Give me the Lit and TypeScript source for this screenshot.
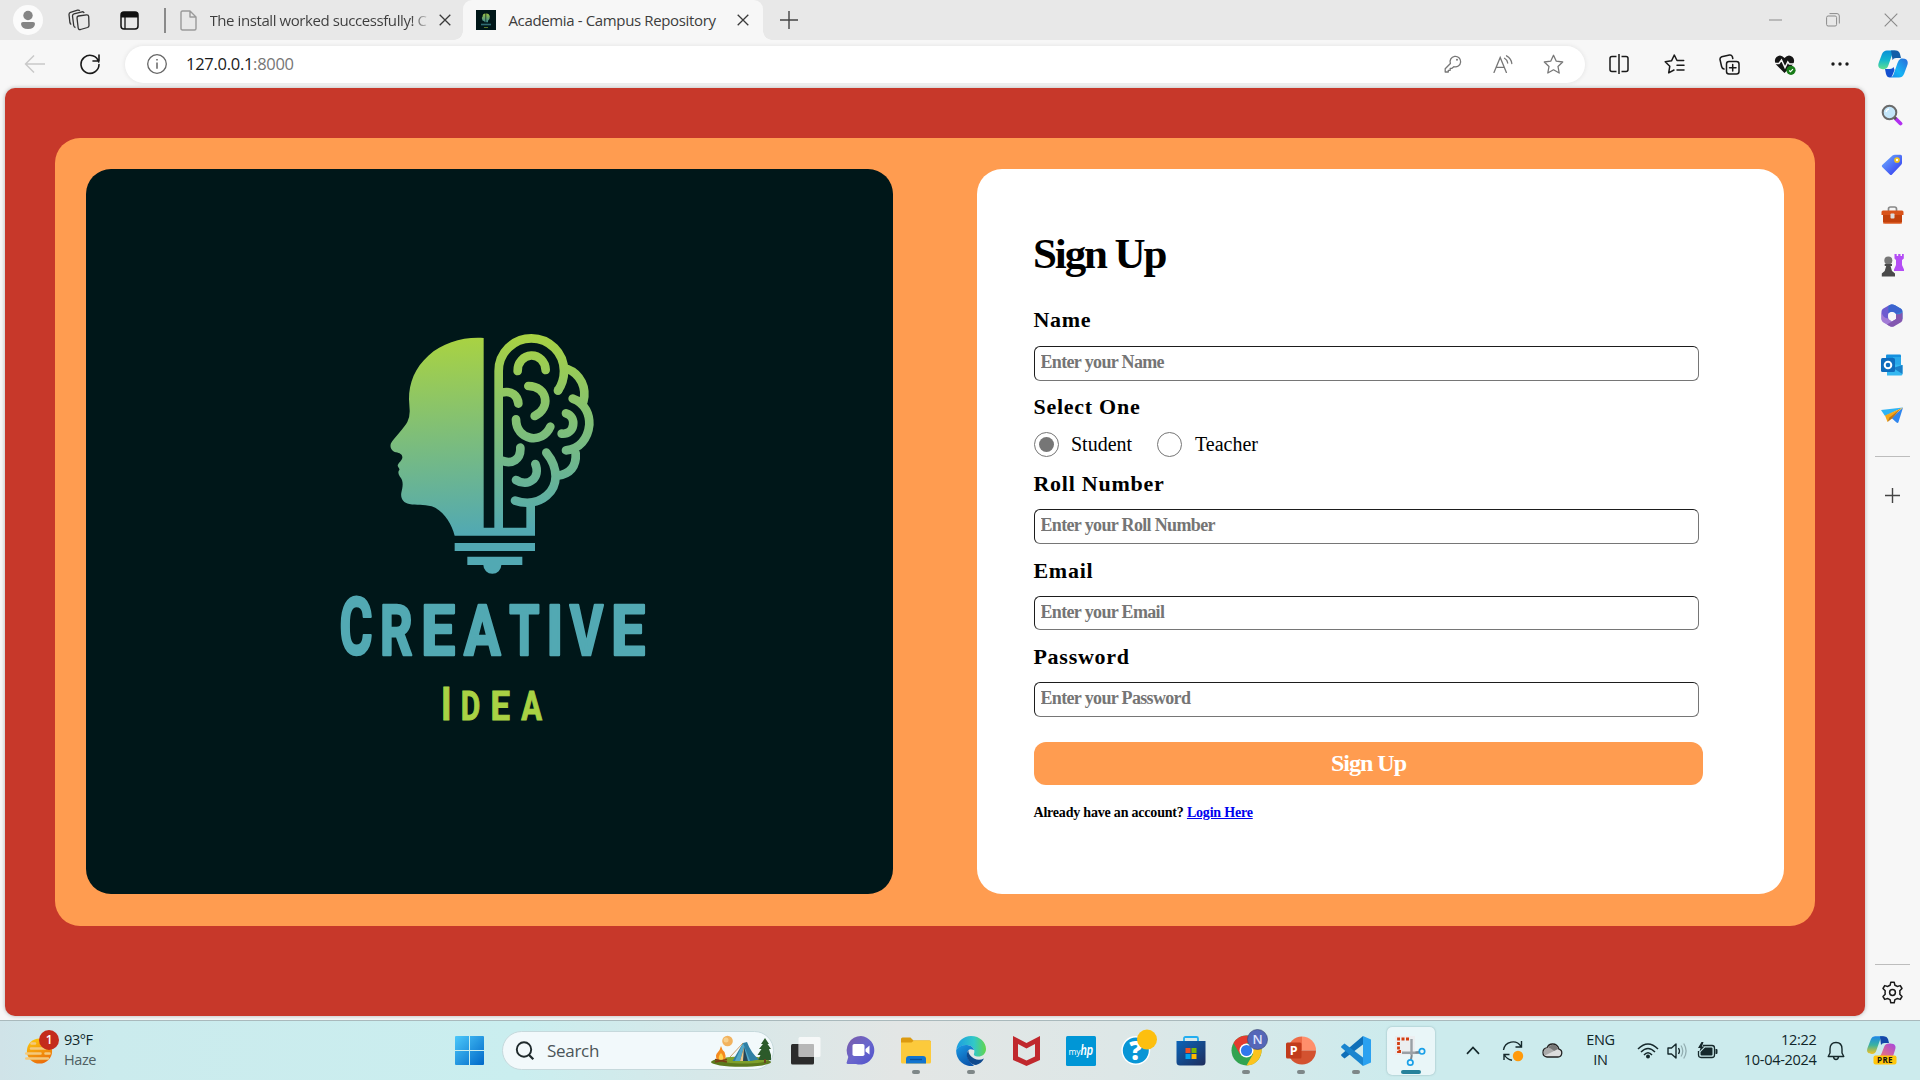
import { LitElement, html, css, svg, TemplateResult } from "lit";
import { customElement } from "lit/decorators.js";

const icon = (w: number, h: number, body: unknown, cls = "") =>
  html`<svg class="ic ${cls}" width=${w} height=${h} viewBox="0 0 ${w} ${h}" fill="none">${body}</svg>`;

/* ---------- brand artwork ---------- */
/* ink width and left bearing of each capital, in em */
const metrics: Record<string, [number, number]> = {
  C: [0.58, 0.04], R: [0.565, 0.057], E: [0.465, 0.057], A: [0.665, 0.006], T: [0.59, 0.02], I: [0.145, 0.065], V: [0.645, 0.006], D: [0.54, 0.057],
};
const letter = (ch: string, x: number, w: number, fs: number, y: number, sw: number) => {
  const [ink, lsb] = metrics[ch];
  const s = w / (ink * fs + sw);
  const tx = x - s * (lsb * fs - sw / 2);
  return svg`<text transform=${`translate(${tx.toFixed(1)} ${y}) scale(${s.toFixed(3)} 1)`} font-size=${fs} stroke-width=${sw}>${ch}</text>`;
};
const word: [string, number, number][] = [["R", 186, 92], ["E", 310, 92], ["A", 430, 115], ["T", 568, 92], ["I", 687, 32], ["V", 747, 105], ["E", 880, 92]];
const word2: [string, number, number][] = [["D", 426, 51], ["E", 516, 51], ["A", 603, 64]];

const logo = (w: number, h: number) => html`
  <svg class="logo" width=${w} height=${h} viewBox="0 0 1050 1290" fill="none">
    <defs>
      <linearGradient id="brand" gradientUnits="userSpaceOnUse" x1="490" y1="85" x2="520" y2="665">
        <stop offset="0" stop-color="#a8d243" />
        <stop offset="1" stop-color="#52a9b2" />
      </linearGradient>
    </defs>
    <path fill="url(#brand)" d="M491 84C430 80 370 97 325 137C285 173 267 218 267 268L269 300Q270 320 262 336C254 352 222 384 213 400C208 412 216 425 228 427C240 429 248 434 247 443C246 452 235 458 233 466C233 472 240 476 238 480C233 484 235 494 240 500C252 513 248 532 244 548C241 565 250 579 268 582C290 586 310 583 335 589C370 601 395 640 404 677H645V653H491Z" />
    <g stroke="url(#brand)" stroke-width="26" stroke-linecap="round">
      <path stroke-linecap="butt" d="M536 665V183A98 98 0 0 1 732 183Q732 215 714 242M632 665V580" />
      <path d="M714 242L714 241" />
      <path d="M593 183A42 45 0 0 1 677 180" />
      <path d="M625 228C683 228 694 295 644 318" />
      <path d="M545 248C575 240 594 258 595 281" />
      <path d="M588 328C588 392 668 405 691 350" />
      <path d="M545 452C577 464 603 448 601 413" />
      <path d="M646 462C663 502 625 534 588 510" />
      <path d="M679 428C718 476 714 529 680 557C655 578 620 584 585 572" />
      <path d="M742 177C782 192 801 235 790 275" />
      <path d="M758 266C798 280 809 317 808 344C804 386 778 418 738 421" />
      <path d="M738 310C772 320 765 375 725 371" />
      <path d="M767 430C770 470 750 492 712 497" />
    </g>
    <path fill="#52a9b3" d="M404 699H645V723H404ZM442 740H607V765H544A27 26 0 0 1 490 765H442Z" />
    <g font-family="Roboto, sans-serif" font-weight="700" stroke-linejoin="round" fill="#52a9b3" stroke="#52a9b3">
      ${letter("C", 62, 93, 237, 1033, 8)}${word.map(([c, x, lw]) => letter(c, x, lw, 212, 1036, 8))}
    </g>
    <g font-family="Roboto, sans-serif" font-weight="700" fill="#a9d244" stroke="#a9d244">
      ${letter("I", 369, 18, 138, 1228.5, 3)}${word2.map(([c, x, lw]) => letter(c, x, lw, 120, 1228.5, 3))}
    </g>
  </svg>`;

const favicon = icon(14, 17, svg`<defs><linearGradient id="fv" x1="0" y1="0" x2="0" y2="1"><stop stop-color="#9cc243" /><stop offset="1" stop-color="#3d8b92" /></linearGradient></defs><path d="M6.500 1.500Q3.500 1.700 3.600 4.500L2.800 6L3.500 8.500L5.300 9.200L5.800 10.200H6.500ZM7.200 1.500Q10 1 10.800 4Q11.200 7 9 8.700V10.200H7.200Z" fill="url(#fv)" /><path d="M2 12.500H12" stroke="#2f6c73" stroke-width="1.600" /><path d="M5 15.500H9" stroke="#5d7a2a" />`);

/* ---------- line icons ---------- */
const closeX = (s = 12, c = "#3a3a3a", sw = 1.3) =>
  icon(s, s, svg`<path d="M.7 .7L${s - 0.7} ${s - 0.7}M${s - 0.7} .7L.7 ${s - 0.7}" stroke=${c} stroke-width=${sw} />`);
const plusIcon = (s: number, c: string) =>
  icon(s, s, svg`<path d="M${s / 2} 0V${s}M0 ${s / 2}H${s}" stroke=${c} stroke-width="1.4" />`);

const workspaces = icon(22, 22, svg`<g stroke="#333" stroke-width="1.300" stroke-linejoin="round"><path d="M10.500 7L18.500 5.800Q20.500 5.600 20.700 7.500L21 16.500Q21 18 19.500 18.500L12.500 20.500Q10.500 21 10.200 19L9 9Q8.900 7.300 10.500 7Z" /><path d="M7.500 18.500Q6 18.300 5.700 16.500L4.500 7Q4.500 5.200 6 4.800L14 2.800Q15.500 2.500 16.200 4M3.300 15.500Q2.200 15 1.900 13.500L1 5.500Q1 3.800 2.500 3.300L9.500 1.200Q11 .9 11.800 1.800" /></g>`);
const tabActions = icon(19, 19, svg`<rect x="1" y="1" width="17" height="17" rx="3" stroke="#111" stroke-width="1.500" /><path d="M1 6.500V3.500Q1 1 3.500 1H15.500Q18 1 18 3.500V6.500Z" fill="#111" /><path d="M5 6V18" stroke="#111" stroke-width="1.300" />`);
const docIcon = icon(17, 21, svg`<path d="M3 1H10L16 7V18.500Q16 20 14.500 20H2.500Q1 20 1 18.500V2.500Q1 1 2.500 1ZM10 1V7H16" stroke="#9a9a9a" stroke-width="1.400" stroke-linejoin="round" />`);
const backIcon = icon(22, 20, svg`<path d="M21 10H2M10 1.500L1.500 10L10 18.500" stroke="#c9c9c9" stroke-width="1.400" />`);
const reloadIcon = icon(22, 22, svg`<path d="M19.700 9A9 9 0 1 0 20 11.500M20 2V8H14" stroke="#1a1a1a" stroke-width="1.600" stroke-linecap="round" stroke-linejoin="round" />`);
const infoIcon = icon(22, 22, svg`<circle cx="11" cy="11" r="9.300" stroke="#666" stroke-width="1.300" /><path d="M11 9.500V15.800M11 6V7.600" stroke="#666" stroke-width="1.500" />`);
const keyIcon = icon(18, 18, svg`<path d="M6.400 8.500A5.300 5.300 0 1 1 9.800 11.700L8 13.300H6.200V15.300H4.300V17H1.200V13.800Z" stroke="#777" stroke-width="1.300" stroke-linejoin="round" /><circle cx="13" cy="4.800" r="1" fill="#777" />`);
const readIcon = icon(20, 18, svg`<path d="M1 17.500L7.200 2.500L13.400 17.500M3.200 12.300H11.200M11.500 3.300Q14.300 4.800 14.700 8M13.500 .8Q18.300 3.300 18.800 8.500" stroke="#777" stroke-width="1.300" stroke-linecap="round" />`);
const starPath = "M10.500 1.300L13.300 7.200L19.700 8L15 12.500L16.200 19L10.500 15.800L4.800 19L6 12.500L1.300 8L7.700 7.200Z";
const starIcon = icon(21, 21, svg`<path d=${starPath} stroke="#777" stroke-width="1.300" stroke-linejoin="round" />`);
const splitIcon = icon(20, 20, svg`<path d="M7.500 2.500H3Q1 2.500 1 4.500V15.500Q1 17.500 3 17.500H7.500M12.500 2.500H17Q19 2.500 19 4.500V15.500Q19 17.500 17 17.500H12.500M10 0V20" stroke="#1a1a1a" stroke-width="1.500" />`);
const favIcon = icon(21, 21, svg`<path d="M19.700 6.500H13L10.300 1L7.500 6.800L1.200 7.700L5.800 12.200L4.700 18.800L10 16M13 11.300H20M13 16H20" stroke="#1a1a1a" stroke-width="1.500" stroke-linejoin="round" stroke-linecap="round" />`);
const collectIcon = icon(21, 21, svg`<g stroke="#1a1a1a" stroke-width="1.500" stroke-linecap="round" stroke-linejoin="round"><rect x="7.500" y="7.500" width="12.500" height="12.500" rx="2.500" /><path d="M13.700 10.500V17M10.500 13.700H17M5 15Q3 14.500 2.600 12.500L1 5.500Q.8 3.500 2.700 2.800L10.500 1Q12.500 .7 13.300 2.500L13.800 4.500" /></g>`);
const heartIcon = icon(22, 21, svg`<path d="M10.500 19L2 10.500Q-.5 6 2.500 3Q6.500 -.5 10.500 4Q14.500 -.5 18.500 3Q21.500 6 19 10.500Z" fill="#151515" /><path d="M0 9.500H5L7.500 6L11 13.500L13.800 8L15.300 10H21" stroke="#f7f7f7" stroke-width="1.500" /><circle cx="17" cy="16.300" r="4.600" fill="#187b18" /><path d="M15.200 16.500L16.500 17.700L19 15.100" stroke="#fff" stroke-width="1.100" />`);
const dotsIcon = icon(18, 4, svg`<g fill="#1a1a1a"><circle cx="2" cy="2" r="1.700" /><circle cx="9" cy="2" r="1.700" /><circle cx="16" cy="2" r="1.700" /></g>`);
const gearIcon = icon(23, 23, svg`<path d="M9.800 1.200H13.200L13.900 4.300Q15.200 4.800 16.200 5.500L19.300 4.600L21 7.500L18.800 9.800Q19.100 11.500 18.800 13.200L21 15.500L19.300 18.400L16.200 17.500Q15.200 18.300 13.900 18.700L13.200 21.800H9.800L9.100 18.700Q7.800 18.300 6.800 17.500L3.700 18.400L2 15.500L4.200 13.200Q3.900 11.500 4.200 9.800L2 7.500L3.700 4.600L6.800 5.500Q7.800 4.800 9.100 4.300Z" stroke="#1a1a1a" stroke-width="1.500" stroke-linejoin="round" /><circle cx="11.500" cy="11.500" r="2.900" stroke="#1a1a1a" stroke-width="1.500" />`);

/* ---------- colour icons ---------- */
const copilot = icon(30, 28, svg`
  <defs><linearGradient id="cpA" x1="0" y1="0" x2="0" y2="1"><stop stop-color="#0a8fd6" /><stop offset=".5" stop-color="#12b5cf" /><stop offset="1" stop-color="#5fe08f" /></linearGradient>
  <linearGradient id="cpB" x1="1" y1="0" x2="0" y2="1"><stop stop-color="#2a6ad8" /><stop offset=".6" stop-color="#16b4f5" /><stop offset="1" stop-color="#1687ea" /></linearGradient></defs>
  <path d="M7 19C1 20 -1 17 1 12L4 4Q5.500 .5 9 .5H18Q15 1 14 5L10.500 15Q9.500 18.500 7 19Z" fill="url(#cpA)" />
  <path d="M13 .5H18Q21 .5 22 4L23 8H18Q15.500 8 14.500 10Z" fill="#145fa8" />
  <path d="M23 8.500C29 8 31 11 29 16L26 24Q24.500 27.500 21 27.500H12Q15 27 16 23L19.500 13Q20.500 9.500 23 8.500Z" fill="url(#cpB)" />
  <path d="M7 19H12Q14.500 19 15.500 17L16.500 20L14.500 25Q13.800 27.500 12 27.500Q9 27.500 8 24Z" fill="#1450cf" />`);
const searchColor = icon(22, 22, svg`<path d="M14.500 14.500L19.500 19.500" stroke="#b12ff0" stroke-width="3.800" stroke-linecap="round" /><path d="M12.500 12.500L15 15" stroke="#555" stroke-width="2.600" /><circle cx="8.500" cy="8.500" r="6.800" fill="#c4e6fa" stroke="#6a6a6a" stroke-width="2" /><path d="M5 8Q5.500 5.500 8 5" stroke="#fff" stroke-width="1.300" />`);
const tagIcon = icon(22, 22, svg`<defs><linearGradient id="tg" x1="0" y1="0" x2="1" y2="1"><stop stop-color="#6fb4ff" /><stop offset="1" stop-color="#3131ee" /></linearGradient></defs><path d="M11.500 1.500Q12.500 .8 14 .8H19.500Q21 .8 21 2.300V9Q21 10 20 11L11 20.400Q10 21.500 8.800 20.400L1.200 13Q.2 12 1.200 11Z" fill="url(#tg)" /><circle cx="16" cy="6" r="2" fill="#fff" stroke="#f5c518" stroke-width="1.700" />`);
const toolbox = icon(23, 18, svg`<path d="M7.500 5V3Q7.500 1 9.500 1H13.500Q15.500 1 15.500 3V5" stroke="#888" stroke-width="1.700" /><path d="M2 8H21V15.500Q21 17.500 19 17.500H4Q2 17.500 2 15.500Z" fill="#c2410c" /><path d="M.5 6Q.5 4.500 2 4.500H21Q22.500 4.500 22.500 6V9H.5Z" fill="#d9531a" /><rect x="9.500" y="7.500" width="4" height="5" rx=".8" fill="#ddd" /><path d="M2 17H21" stroke="#e8672a" />`);
const chess = icon(23, 23, svg`<path d="M13.500 0H15.700V2H17.200V0H19.500V2H21V0H22.800V4.500L21 6V11L23 15.500V17H13V15.500L15 11V6L13.500 4.500Z" fill="#b44df5" /><circle cx="7.300" cy="6.500" r="4" fill="#777" /><path d="M3.700 10H11V12H9.500L11 17L14 19.500V22.500H.8V19.500L3.700 17L5.200 12H3.700Z" fill="#4a4a4a" />`);
const m365 = icon(22, 23, svg`
  <path d="M11 .5Q9.500 .3 8 1.200L2 4.700Q.5 5.700 .5 7.500V15.500L7.500 18V9.500L14 6Z" fill="#6d5bd0" />
  <path d="M11 .5Q12.500 .3 14 1.200L20 4.700Q21.500 5.700 21.500 7.500V15L15 12V10L7.500 6V2.500Q9 .5 11 .5Z" fill="#2f86d8" />
  <path d="M7.500 2V9.500L11 7.500L15 10L21.500 7.500Q21 5.500 20 4.700L14 1.200Q11 -.5 7.500 2Z" fill="#3c64cf" />
  <path d="M.5 8V15.500Q.5 17.300 2 18.300L8 21.800Q11 23.500 14 21.800L15 15L11 17.500L7 14.500Q2 14 .5 8Z" fill="#a27bd6" />
  <path d="M21.500 8V15.500Q21.500 17.300 20 18.300L14 21.800Q11 23.500 8 21.800L6 20.500L15 15V10Q19 11 21.500 8Z" fill="#8357b0" />
  <circle cx="11" cy="12" r="4" fill="#f7f7f7" />`);
const outlook = icon(22, 22, svg`<rect x="5" y=".5" width="15" height="15" rx="1" fill="#1490df" /><path d="M12 3H20V11H12Z" fill="#28a8ea" /><path d="M6 21.500V10L21.500 11V20Q21.500 21.500 20 21.500Z" fill="#35b8f1" /><path d="M21.500 11V20L12 14Z" fill="#1a7fc8" /><rect x="0" y="4" width="14" height="14" rx="1.500" fill="#0f6cbd" /><circle cx="7" cy="11" r="3.300" stroke="#fff" stroke-width="2" />`);
const plane = icon(22, 17, svg`<path d="M0 3L22 .5L4 9Z" fill="#2fb4f5" /><path d="M22 .5L17.500 15Q17 16.500 15.500 15.500L10.500 11Z" fill="#2f86ee" /><path d="M22 .5L4 8.500L6.500 15L9 11Z" fill="#f5a81b" /><path d="M20 1.500L8.500 10.500L6.500 15L11 11.500Z" fill="#b8741a" />`);

const weather = icon(30, 26, svg`<defs><linearGradient id="sun" x1=".3" y1="0" x2=".7" y2="1"><stop stop-color="#fbc50e" /><stop offset="1" stop-color="#ea6a0b" /></linearGradient></defs><circle cx="14.500" cy="13" r="12.600" fill="url(#sun)" /><g stroke="#f4c97c" stroke-width="2.600" stroke-linecap="round"><path d="M1.300 15.500H15.500M20.500 15.500H24.500M1.300 20.500H23M6 10.500H20M6.500 5.500H10" /></g>`);
const winLogo = icon(29, 29, svg`<defs><linearGradient id="wn" gradientUnits="userSpaceOnUse" x1="0" y1="0" x2="29" y2="29"><stop stop-color="#4cc8fa" /><stop offset="1" stop-color="#0068c8" /></linearGradient></defs><path fill="url(#wn)" d="M1 0H14V14H0V1Q0 0 1 0ZM15 0H28Q29 0 29 1V14H15ZM0 15H14V29H1Q0 29 0 28ZM15 15H29V28Q29 29 28 29H15Z" />`);
const searchGlyph = icon(20, 20, svg`<circle cx="9" cy="8.500" r="7.200" stroke="#1f2a2c" stroke-width="1.900" /><path d="M13.800 13.800L18.300 18.300" stroke="#1f2a2c" stroke-width="2.300" />`);
const camp = icon(62, 32, svg`
  <ellipse cx="31" cy="27" rx="30" ry="4.800" fill="#5c7a1e" /><ellipse cx="34" cy="25" rx="24" ry="3.500" fill="#7fa02a" />
  <circle cx="17.500" cy="6" r="5.300" fill="#f2b25e" /><circle cx="16" cy="5" r="2.500" fill="#f7cf8c" />
  <path d="M11 11Q12 15 14.500 17Q16.500 21 15 25H7Q4.500 20 8 17Q10 15 11 11Z" fill="#f58a1f" /><path d="M11 18Q14 21 13 25H9Q8 21 11 18Z" fill="#ffd24a" /><path d="M5 27L17 24.500M5 24.500L17 27" stroke="#7a3e16" stroke-width="1.700" />
  <path d="M55 3L51 9H53L49 14H51.500L47.500 20H50.500L48 25H61V20L59 14H61L57.500 9H59Z" fill="#2c5a2a" /><path d="M55 24V28" stroke="#6b4420" stroke-width="2" />
  <path d="M33 8L22.500 26H41L49 24.500Q41 18 37 7Z" fill="#2f7fa4" /><path d="M33 8L25 26H40Z" fill="#53a9c9" /><path d="M34 12L30 26H38Z" fill="#24465a" /><path d="M34 12L30 26H33Z" fill="#e9c78a" /><path d="M33 8L20 22" stroke="#b98545" stroke-width=".8" />`);
const taskView = icon(30, 28, svg`<rect x="0" y="7" width="23" height="20.500" rx="1.500" fill="#2b2b2b" /><rect x="7.500" y="0" width="22" height="20" rx="1.500" fill="#fff" fill-opacity=".72" /><path d="M7.500 7H23V20H7.500Z" fill="#a9a9a9" fill-opacity=".5" />`);
const chat = icon(30, 29, svg`<defs><linearGradient id="ch" x1="0" y1="0" x2="1" y2="1"><stop stop-color="#7b5aa6" /><stop offset=".5" stop-color="#6a66cc" /><stop offset="1" stop-color="#4f52cc" /></linearGradient></defs><path d="M15 0A14.300 14.300 0 1 1 10 28H2Q0 28 .8 26L2.300 21A14.300 14.300 0 0 1 15 0Z" fill="url(#ch)" /><rect x="6.500" y="8" width="12" height="12" rx="1.800" fill="#fff" /><path d="M19.500 13L23.500 9.500V18.500L19.500 15.500Z" fill="#fff" />`);
const folder = icon(30, 27, svg`<path d="M0 2Q0 .5 1.500 .5H9.500L12.500 3.500H28.500Q30 3.500 30 5V10H0Z" fill="#dc9a10" /><path d="M0 5.500H10.500L13 3.500H28.500Q30 3.500 30 5V25Q30 26.500 28.500 26.500H1.500Q0 26.500 0 25Z" fill="#fcca3c" /><path d="M5 26.500V22Q5 19 8 19H22Q25 19 25 22V26.500Z" fill="#1274cf" /><path d="M9 22.500H21" stroke="#0a4f9a" stroke-width="1.300" />`);
const edge = icon(30, 30, svg`<defs><linearGradient id="eg" x1="0" y1=".3" x2="1" y2=".3"><stop stop-color="#1b9de2" /><stop offset=".6" stop-color="#32c8c8" /><stop offset="1" stop-color="#62d64a" /></linearGradient><linearGradient id="eb" x1="0" y1="0" x2=".5" y2="1"><stop stop-color="#1a9be6" /><stop offset="1" stop-color="#0b58ae" /></linearGradient></defs>
  <path d="M.3 14C1 5.500 7.500 0 15 0C24 0 30 6.500 30 13C30 18 26 20.500 22.500 20.500C18.500 20.500 17.500 19 18 17.800C19.500 14 17 9.500 11 9Q4 9 .3 14Z" fill="url(#eg)" />
  <path d="M.2 14Q4 8.500 11 9C15 9.300 17.500 11.500 18 14Q12 11.500 11 17Q10.500 24 18 29.700A15 15 0 0 1 .2 14Z" fill="url(#eb)" />
  <path d="M12.200 14Q9 20 13 25Q16 29 20 29Q25.500 27.500 28 22.500Q23 25 18 22.500Q12.500 19.500 12.200 14Z" fill="#104a8e" />`);
const mcafee = icon(27, 30, svg`<path d="M0 0L13.500 7L27 0V24L13.500 30L0 24ZM5 8V20.500L13.500 24.500L22 20.500V8L13.500 12.500Z" fill="#c0282d" fill-rule="evenodd" />`);
const myhp = icon(30, 30, svg`<rect width="30" height="30" rx="1.500" fill="#0096d6" /><text x="2.500" y="18.500" font-family="Open Sans, sans-serif" font-size="8.500" fill="#fff">my</text><text x="14.500" y="19" font-family="Liberation Sans Narrow, Liberation Sans, sans-serif" font-style="italic" font-weight="700" font-size="14" fill="#fff" textLength="12.500" lengthAdjust="spacingAndGlyphs">hp</text>`);
const help = icon(37, 37, svg`<circle cx="14.800" cy="21.500" r="13.700" fill="#0996d6" stroke="#fff" stroke-width="1.400" /><text x="14.800" y="31" text-anchor="middle" font-family="Open Sans, sans-serif" font-weight="800" font-size="26" fill="#fff">?</text><circle cx="26" cy="10.500" r="10" fill="#fdbf0f" />`);
const store = icon(30, 30, svg`<defs><linearGradient id="st" x1="0" y1="0" x2="1" y2="1"><stop stop-color="#0b64b8" /><stop offset="1" stop-color="#1f2d5c" /></linearGradient></defs><path d="M8 6V2.500Q8 1 9.500 1H20.500Q22 1 22 2.500V6" stroke="#23aef0" stroke-width="1.800" /><path d="M.5 5H29.500V26Q29.500 29.500 26 29.500H4Q.5 29.500 .5 26Z" fill="url(#st)" /><path d="M9.500 12H14.500V17H9.500Z" fill="#f25022" /><path d="M15.500 12H20.500V17H15.500Z" fill="#7fba00" /><path d="M9.500 18H14.500V23H9.500Z" fill="#00a4ef" /><path d="M15.500 18H20.500V23H15.500Z" fill="#ffb900" />`);
const chrome = icon(37, 37, svg`<circle cx="15.500" cy="21.500" r="15" fill="#31a350" /><path d="M2.500 14A15 15 0 0 1 28.500 14H15.500L9 25.300Z" fill="#e33b2e" /><path d="M28.500 14A15 15 0 0 1 15.500 36.500L22 25.200L22 14Z" fill="#fcc31e" /><circle cx="15.500" cy="21.500" r="7" fill="#fff" /><circle cx="15.500" cy="21.500" r="5.600" fill="#2f78ec" /><circle cx="26.500" cy="10.500" r="10" fill="#5566b8" stroke="#3f4a78" stroke-width=".7" /><text x="26.500" y="15.300" text-anchor="middle" font-family="Open Sans, sans-serif" font-weight="600" font-size="13" fill="#dfe4ff">N</text>`);
const ppt = icon(30, 29, svg`<path d="M16 .5A14 14 0 0 0 2 14.500H16Z" fill="#ed6c47" /><path d="M16 .5A14 14 0 0 1 30 14.500H16Z" fill="#ff8f6b" /><path d="M2 14.500A14 14 0 0 0 30 14.500Z" fill="#d35230" /><rect x="0" y="6.500" width="15.500" height="16" rx="1.500" fill="#c13b1b" /><text x="7.700" y="19" text-anchor="middle" font-family="Open Sans, sans-serif" font-weight="700" font-size="12.500" fill="#fff">P</text>`);
const vscode = icon(30, 30, svg`<path d="M22 0L30 3.500V26.500L22 30Z" fill="#2aa1f0" /><path d="M22 0V8.500L3.500 22.500L.5 20Q-.2 19 .5 18.300Z" fill="#0f6fb8" /><path d="M22 30V21.500L3.500 7.500L.5 10Q-.2 11 .5 11.700Z" fill="#1a85cf" />`);
const snip = icon(36, 32, svg`<rect x="2" y="1" width="20" height="19" fill="#eceef0" /><path d="M16 4H5.500V16.500H9" stroke="#d33d10" stroke-width="2.800" stroke-dasharray="3 1.500" /><path d="M18.500 4V20M9 17.800H26" stroke="#9aa0a5" stroke-width="2.400" /><path d="M18.800 20L18 24.500M22.500 17.500L26.500 17" stroke="#7a868e" stroke-width="2" /><circle cx="17.300" cy="27.500" r="2.700" stroke="#1aa0e8" stroke-width="1.700" /><circle cx="29" cy="16.300" r="2.700" stroke="#1aa0e8" stroke-width="1.700" />`);

const chevron = icon(14, 9, svg`<path d="M1 7.800L7 1.500L13 7.800" stroke="#15282b" stroke-width="1.700" />`);
const sync = icon(22, 22, svg`<path d="M1.500 10A9.500 9.500 0 0 1 19 6.500M19.500 1V7H13.500M2 20V14.500H7.500M2.500 15Q5 19.500 10 20.300" stroke="#15282b" stroke-width="1.400" /><circle cx="16" cy="16" r="5.200" fill="#ff9a0c" />`);
const cloud = icon(21, 15, svg`<path d="M5 14H16A4 4 0 0 0 17 6.200Q15.500 1 10.500 1Q6.500 1 5 5Q1 5.500 1 9.500Q1 13.500 5 14Z" fill="#ddd" stroke="#222" stroke-width="1.300" /><path d="M5 5Q8 4 12 8L3 12.500Q1.500 11 1.700 9Q2 5.500 5 5Z" fill="#aaa" /><path d="M6 4.500Q8 1.500 11 1.800Q15 2 16.200 6L12 8Q9 5 6 4.500Z" fill="#777" />`);
const wifi = icon(22, 16, svg`<g stroke="#15282b" stroke-width="1.500"><path d="M1 6Q11 -4 21 6M4 9Q11 1.800 18 9M7 12Q11 7.500 15 12" /></g><circle cx="11" cy="13.500" r="2" fill="#15282b" />`);
const sound = icon(21, 18, svg`<path d="M1 6H4.500L9 2V16L4.500 12H1Z" stroke="#15282b" stroke-width="1.400" stroke-linejoin="round" /><path d="M11.500 6Q13.500 9 11.500 12" stroke="#15282b" stroke-width="1.300" /><path d="M14 3.500Q17.500 9 14 14.500M16.700 1.500Q21.500 9 16.700 16.500" stroke="#93aeb1" stroke-width="1.300" />`);
const battery = icon(21, 17, svg`<path d="M6 3.500H15Q17.500 3.500 17.500 6V13Q17.500 15.500 15 15.500H4Q1.500 15.500 1.500 13V9" stroke="#15282b" stroke-width="1.300" /><path d="M8 5.500H14.500Q15.500 5.500 15.500 6.500V12.500Q15.500 13.500 14.500 13.500H4.500Q3.500 13.500 3.500 12.500V10Z" fill="#15282b" /><path d="M18.500 7H19.500Q20.500 7 20.500 8V11Q20.500 12 19.500 12H18.500ZM4.500 0L1 6H3.500L2.500 9.500L7.500 4.500H5L6.500 0Z" fill="#15282b" />`);
const bell = icon(18, 20, svg`<path d="M9 1.500Q15 1.500 15 8V12L16.800 15.500H1.200L3 12V8Q3 1.500 9 1.500ZM6.500 16Q7 18.500 9 18.500Q11 18.500 11.500 16" stroke="#15282b" stroke-width="1.400" stroke-linejoin="round" />`);
const copilotPre = icon(30, 29, svg`
  <defs><linearGradient id="pA" x1="0" y1="0" x2="0" y2="1"><stop stop-color="#1c86e8" /><stop offset=".5" stop-color="#3bb3a0" /><stop offset="1" stop-color="#f5c21d" /></linearGradient><linearGradient id="pB" x1="1" y1="0" x2="0" y2="1"><stop stop-color="#a546e0" /><stop offset="1" stop-color="#f77b6b" /></linearGradient></defs>
  <path d="M5 18C0 18 -.5 15 .5 12L4 3Q5 .3 8 .3H17Q14 1 13 4L9.500 14Q8.500 18 5 18Z" fill="url(#pA)" /><path d="M13 .3H17Q20 .3 21 3L22 7H17.500Q15 7 14 9Z" fill="#1447a8" /><path d="M22 7.500C28 7 29.500 10 28 14L25.500 22H11Q14 20 15.500 15L17.500 10Q18.500 7.500 22 7.500Z" fill="url(#pB)" />
  <rect x="6.500" y="19.500" width="23" height="9" rx="2" fill="#ffc60b" /><text x="18" y="27" text-anchor="middle" font-family="Open Sans, sans-serif" font-weight="700" font-size="8" letter-spacing=".4" fill="#111">PRE</text>`);

interface Field { id: string; label: string; hint: string }
const fields: Field[] = [
  { id: "roll", label: "Roll Number", hint: "Enter your Roll Number" },
  { id: "email", label: "Email", hint: "Enter your Email" },
  { id: "password", label: "Password", hint: "Enter your Password" },
];
interface App { art: TemplateResult; run?: boolean; active?: boolean; badge?: boolean }
const apps: App[] = [
  { art: taskView }, { art: chat }, { art: folder, run: true }, { art: edge, run: true }, { art: mcafee }, { art: myhp },
  { art: help, badge: true }, { art: store }, { art: chrome, run: true, badge: true }, { art: ppt, run: true }, { art: vscode, run: true },
  { art: snip, active: true },
];

@customElement("app-root")
export class AppRoot extends LitElement {
  static styles = css`
    :host { display: block; width: 1920px; height: 1080px; overflow: hidden; font-family: "Open Sans", "Noto Sans", sans-serif; background: #f7f7f7; color: #1a1a1a; }
    * { box-sizing: border-box; }
    .ic { display: block; flex: none; }
    .screen { display: grid; grid-template-rows: 40px 48px 932px 60px; height: 1080px; }
    .slot { display: flex; align-items: center; justify-content: center; flex: none; }

    .tabs { background: #e8e8e8; display: flex; align-items: stretch; }
    .left { display: flex; width: 164px; padding-left: 2px; align-items: center; }
    .left .slot { width: 51px; }
    .avatar { width: 30px; height: 30px; border-radius: 50%; background: #fbfbfb; display: flex; align-items: center; justify-content: center; }
    .vline { width: 1.500px; height: 25px; background: #8a8a8a; align-self: center; }
    .tab { display: flex; align-items: center; font-size: 15px; color: #3d3d3d; white-space: nowrap; }
    .tab.idle { width: 297px; padding-left: 14px; }
    .tab.idle .title { width: 221px; margin: 0 8px 0 13px; letter-spacing: -.42px; background: linear-gradient(90deg, #3d3d3d 91%, #3d3d3d22 99%); -webkit-background-clip: text; background-clip: text; color: transparent; }
    .tab.live { width: 300px; background: #f7f7f7; border-radius: 9px 9px 0 0; padding-left: 13px; position: relative; }
    .tab.live::before, .tab.live::after { content: ""; position: absolute; bottom: 0; width: 9px; height: 9px; }
    .tab.live::before { left: -9px; background: radial-gradient(circle at 0 0, transparent 8.500px, #f7f7f7 9px); }
    .tab.live::after { right: -9px; background: radial-gradient(circle at 100% 0, transparent 8.500px, #f7f7f7 9px); }
    .tab.live .title { width: 215px; margin: 0 13px 0 13px; letter-spacing: -.36px; }
    .title { margin-top: -1px !important; }
    .fav { width: 20px; height: 20px; background: #001719; display: flex; align-items: center; justify-content: center; }
    .newtab { width: 52px; }
    .wins { margin-left: auto; display: flex; width: 173px; }
    .wins .slot { width: 57.600px; }

    .bar { display: flex; align-items: center; }
    .back { width: 70px; }
    .reload { width: 40px; }
    .url { margin-left: 15px; width: 1460px; height: 37px; border-radius: 19px; background: #fff; box-shadow: 0 0 5px rgba(0,0,0,.09); display: flex; align-items: center; padding-left: 21px; font-size: 16.500px; }
    .addr { margin: -2px 0 0 18px; letter-spacing: -.28px; }
    .port { color: #767676; }
    .urlicons { margin-left: auto; display: flex; padding-right: 7px; }
    .urlicons .slot { width: 50px; }
    .tools { display: flex; padding-left: 6px; }
    .tools .slot { width: 55.400px; }
    .cop { width: 50px; }

    .main { display: flex; }
    .page { margin-left: 5px; width: 1860px; height: 928px; border-radius: 10px; background: #c7382a; padding: 50px; box-shadow: 0 0 4px rgba(0,0,0,.28); flex: none; }
    .frame { width: 1760px; height: 787.500px; border-radius: 25px; background: #ff9c50; padding: 31px; display: flex; justify-content: space-between; }
    .hero { width: 807px; height: 725px; border-radius: 25px; background: #001719; padding: 141px 0 0 234px; }
    .logo { display: block; flex: none; }
    .card { width: 807px; height: 725px; border-radius: 25px; background: #fff; padding: 59px 0 0 57px; font-family: "Liberation Serif", serif; color: #000; }
    h1 { margin: 1px 0 28px -1px; font-size: 43px; line-height: 50px; letter-spacing: -2.100px; font-weight: 700; }
    .field { display: flex; flex-direction: column; align-items: flex-start; height: 86.600px; }
    .label { display: block; font-size: 22px; line-height: 26px; font-weight: 700; letter-spacing: .75px; margin: 0 0 12px -.6px; }
    .field.first { height: 87px; }
    .field.first .label { margin-bottom: 13px; }
    .input { width: 665px; height: 34.500px; margin: 0; border: 1px solid #767676; border-top-color: #1d1d1d; border-left-color: #1d1d1d; border-radius: 6px; background: #fff; padding: 0 6px 1px 5.500px; font: 700 18px "Liberation Serif", serif; letter-spacing: -.66px; outline: none; }
    .input::placeholder { color: #757575; opacity: 1; }
    .radios { display: flex; align-items: center; height: 25px; margin-bottom: 14px; font-size: 20px; }
    .dot { width: 25px; height: 25px; border: 1px solid #767676; border-radius: 50%; display: flex; align-items: center; justify-content: center; margin-right: 12px; }
    .dot.on::after { content: ""; width: 15px; height: 15px; border-radius: 50%; background: #767676; }
    .opt { display: flex; align-items: center; width: 123px; }
    .opt:last-child .dot { margin-right: 13px; }
    .submit { display: block; width: 669px; height: 43px; margin-top: 11px; border: 0; border-radius: 12px; background: #ff9c50; color: #fff; font: 700 24px "Liberation Serif", serif; letter-spacing: -1px; padding: 0; }
    .foot { margin: 18px 0 0 -.5px; font-size: 14px; line-height: 20px; font-weight: 700; letter-spacing: -.2px; }
    .foot a { color: #0000ee; }

    .side { width: 54px; display: flex; flex-direction: column; align-items: center; padding-top: 2px; }
    .side .slot { height: 50px; }
    .rule { width: 35px; height: 1px; background: #bdbdbd; flex: none; }
    .side .mid { margin-top: 16px; }
    .side .add { height: 76px; }
    .side .low { margin-top: auto; }
    .side .gear { height: 55px; }

    .task { border-top: 1px solid #a9b9bc; background: linear-gradient(90deg, #d0e3e8 0, #cbebed 110px, #caeeef 520px, #d6e8e9 700px, #e3e6e5 900px, #dde7e7 1120px, #ccebed 1400px, #ccebed 1920px); display: flex; align-items: center; color: #10262a; }
    .wx { width: 455px; display: flex; align-items: center; padding-left: 25px; position: relative; font-size: 14.500px; line-height: 20px; letter-spacing: -.4px; }
    .wx .temp { margin: -2px 0 0 9px; }
    .wx .cond { color: #4f6063; }
    .badge { position: absolute; left: 39px; top: -2px; width: 20px; height: 20px; border-radius: 50%; background: #c42b1c; color: #fff; font-size: 12px; font-weight: 600; display: flex; align-items: center; justify-content: center; }
    .pill { margin-left: 18px; width: 272px; height: 39px; border-radius: 20px; background: #f2f9fb; border: 1px solid #c6d9dc; display: flex; align-items: center; padding: 0 1px 0 12px; font-size: 17px; color: #4b5558; letter-spacing: -.3px; }
    .pill .hint { margin: -1px auto 0 12px; }
    .apps { display: flex; margin-left: 4.500px; }
    .app { width: 55px; height: 59px; display: flex; align-items: center; justify-content: center; position: relative; }
    .app.lifted .ic { margin: -7px -7px 0 0; }
    .app.run::after, .app.active::after { content: ""; position: absolute; bottom: 6px; width: 8px; height: 4px; border-radius: 2px; background: #7e8788; }
    .app.active::after { width: 20px; background: #26829b; }
    .tile { width: 48px; height: 48px; border-radius: 5px; background: #e9f6f8; box-shadow: 0 0 2px rgba(80,120,125,.5); display: flex; align-items: center; justify-content: center; }
    .tray { display: flex; align-items: center; flex: 1; font-size: 14.500px; line-height: 20px; letter-spacing: -.3px; }
    .tray .slot { width: 40px; }
    .tray .first { margin-left: 14px; }
    .tray .lang { width: 56px; margin-top: -2px; text-align: center; }
    .tray .net { display: flex; margin-left: 4px; }
    .tray .net .slot { width: 30px; }
    .clock { width: 94px; margin-top: -2px; text-align: right; white-space: nowrap; }
    .tray .bell { width: 38px; }
    .tray .pre { width: 54px; }
  `;

  render() {
    return html`
      <div class="screen">
        <header class="tabs">
          <div class="left">
            <div class="slot"><div class="avatar">${icon(16, 20, svg`<circle cx="8" cy="5.500" r="4.700" fill="#858585" /><path d="M1 14Q1 12 3 12H13Q15 12 15 14Q14.500 19 8 19Q1.500 19 1 14Z" fill="#858585" />`)}</div></div>
            <div class="slot">${workspaces}</div>
            <div class="slot">${tabActions}</div>
          </div>
          <div class="vline"></div>
          <div class="tab idle">${docIcon}<span class="title">The install worked successfully! C</span>${closeX()}</div>
          <div class="tab live"><div class="fav">${favicon}</div><span class="title">Academia - Campus Repository</span>${closeX()}</div>
          <div class="slot newtab">${plusIcon(18, "#444")}</div>
          <div class="wins">
            <div class="slot">${icon(13, 2, svg`<path d="M0 1H13" stroke="#8a8a8a" />`)}</div>
            <div class="slot">${icon(14, 14, svg`<rect x=".6" y="3" width="10" height="10" rx="1.500" stroke="#8a8a8a" /><path d="M3.500 .6H11Q13.300 .6 13.300 3V10.500" stroke="#8a8a8a" />`)}</div>
            <div class="slot">${closeX(14, "#8a8a8a", 1.1)}</div>
          </div>
        </header>

        <nav class="bar">
          <div class="slot back">${backIcon}</div>
          <div class="slot reload">${reloadIcon}</div>
          <div class="url">
            ${infoIcon}<span class="addr">127.0.0.1<span class="port">:8000</span></span>
            <div class="urlicons"><div class="slot">${keyIcon}</div><div class="slot">${readIcon}</div><div class="slot">${starIcon}</div></div>
          </div>
          <div class="tools">${[splitIcon, favIcon, collectIcon, heartIcon, dotsIcon].map((i) => html`<div class="slot">${i}</div>`)}</div>
          <div class="slot cop">${copilot}</div>
        </nav>

        <main class="main">
          <div class="page">
            <div class="frame">
              <div class="hero">${logo(350, 430)}</div>
              <form class="card">
                <h1>Sign Up</h1>
                <div class="field first"><label class="label" for="name">Name</label><input class="input" id="name" placeholder="Enter your Name" /></div>
                <div class="label">Select One</div>
                <div class="radios">
                  <div class="opt"><span class="dot on"></span>Student</div>
                  <div class="opt"><span class="dot"></span>Teacher</div>
                </div>
                ${fields.map((f) => html`<div class="field"><label class="label" for=${f.id}>${f.label}</label><input class="input" id=${f.id} placeholder=${f.hint} /></div>`)}
                <button class="submit" type="button">Sign Up</button>
                <div class="foot">Already have an account? <a href="#">Login Here</a></div>
              </form>
            </div>
          </div>
          <aside class="side">
            ${[searchColor, tagIcon, toolbox, chess, m365, outlook, plane].map((i) => html`<div class="slot">${i}</div>`)}
            <div class="rule mid"></div>
            <div class="slot add">${plusIcon(15, "#444")}</div>
            <div class="rule low"></div>
            <div class="slot gear">${gearIcon}</div>
          </aside>
        </main>

        <footer class="task">
          <div class="wx">${weather}<div class="temp">93°F<div class="cond">Haze</div></div><span class="badge">1</span></div>
          ${winLogo}
          <div class="pill">${searchGlyph}<span class="hint">Search</span>${camp}</div>
          <div class="apps">
            ${apps.map((a) => html`<div class="app ${a.run ? "run" : ""} ${a.active ? "active" : ""} ${a.badge ? "lifted" : ""}">${a.active ? html`<div class="tile">${a.art}</div>` : a.art}</div>`)}
          </div>
          <div class="tray">
            <div class="slot first">${chevron}</div><div class="slot">${sync}</div><div class="slot">${cloud}</div>
            <div class="lang">ENG<br />IN</div>
            <div class="net"><div class="slot">${wifi}</div><div class="slot">${sound}</div><div class="slot">${battery}</div></div>
            <div class="clock">12:22<br />10-04-2024</div>
            <div class="slot bell">${bell}</div>
            <div class="slot pre">${copilotPre}</div>
          </div>
        </footer>
      </div>`;
  }
}
